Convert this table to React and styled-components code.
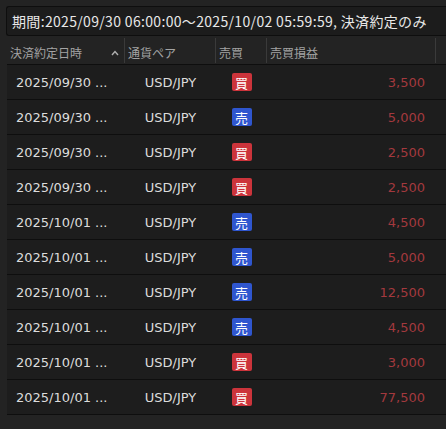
import React from 'react';
import styled, { createGlobalStyle } from 'styled-components';

const GlobalStyle = createGlobalStyle`
  html, body {
    margin: 0;
    background: #232323;
    overflow: hidden;
  }
  body {
    font-family: "DejaVu Sans", "Noto Sans CJK JP", sans-serif;
  }
`;

const Page = styled.div`
  padding: 6px 0 0 6px;
  width: 446px;
  height: 429px;
  box-sizing: border-box;
`;

const FilterBox = styled.div`
  height: 30px;
  box-sizing: border-box;
  border: 1px solid #0e0e0e;
  border-right: none;
  border-radius: 3px 0 0 3px;
  background: #1c1c1c;
  color: #e8e8e8;
  font-family: "Noto Sans CJK JP", sans-serif;
  font-size: 14px;
  letter-spacing: 0.33px;
  display: flex;
  align-items: center;
  padding-left: 5px;
  white-space: pre;
`;

const Table = styled.div`
  margin: 2px 0 0 1px;
  display: grid;
  grid-template-columns: 118px 91px 51px 169px 1fr;
`;

const HeadCell = styled.div`
  height: 27px;
  box-sizing: border-box;
  border-bottom: 1px solid #0e0e0e;
  display: flex;
  align-items: center;
  justify-content: space-between;
  padding: 3px 0 0 3px;
  font-family: "Noto Sans CJK JP", sans-serif;
  font-size: 12px;
  color: #a4a4a4;
  position: relative;
  &::after {
    content: '';
    display: ${p => (p.$sep ? 'block' : 'none')};
    position: absolute;
    right: 0;
    top: 0;
    bottom: 1px;
    width: 1px;
    background: #3a3a3a;
  }
`;

const Caret = styled.svg`
  width: 8px;
  height: 8px;
  margin-right: 6px;
`;

const Cell = styled.div`
  height: 35px;
  box-sizing: border-box;
  border-bottom: 1px solid #0e0e0e;
  background: #1d1d1d;
  display: flex;
  align-items: center;
  justify-content: ${p => p.$align || 'flex-start'};
  padding: ${p => p.$pad || '0'};
  font-size: 13px;
  color: #dcdcdc;
  white-space: nowrap;
`;

const Amount = styled(Cell)`
  color: #a3393e;
`;

const Badge = styled.span`
  width: 20px;
  height: 18px;
  border-radius: 2px;
  background: ${p => (p.$sell ? '#2f56cf' : '#cc343b')};
  color: #fff;
  font-family: "Noto Sans CJK JP", sans-serif;
  font-size: 13px;
  display: flex;
  align-items: center;
  justify-content: center;
  line-height: 1;
`;

const rows = [
  ['2025/09/30 ...', 'buy', '3,500'],
  ['2025/09/30 ...', 'sell', '5,000'],
  ['2025/09/30 ...', 'buy', '2,500'],
  ['2025/09/30 ...', 'buy', '2,500'],
  ['2025/10/01 ...', 'sell', '4,500'],
  ['2025/10/01 ...', 'sell', '5,000'],
  ['2025/10/01 ...', 'sell', '12,500'],
  ['2025/10/01 ...', 'sell', '4,500'],
  ['2025/10/01 ...', 'buy', '3,000'],
  ['2025/10/01 ...', 'buy', '77,500'],
];

export default function App() {
  return (
    <Page>
      <GlobalStyle />
      <FilterBox>期間:2025/09/30 06:00:00～2025/10/02 05:59:59, 決済約定のみ</FilterBox>
      <Table>
        <HeadCell $sep>
          決済約定日時
          <Caret viewBox="0 0 8 8">
            <path d="M1 6 L4 2.5 L7 6" fill="none" stroke="#b0b0b0" strokeWidth="1.4" />
          </Caret>
        </HeadCell>
        <HeadCell $sep>通貨ペア</HeadCell>
        <HeadCell $sep>売買</HeadCell>
        <HeadCell $sep>売買損益</HeadCell>
        <HeadCell />
        {rows.map(([date, side, amount], i) => (
          <React.Fragment key={i}>
            <Cell $pad="0 0 0 9px">{date}</Cell>
            <Cell $align="center">USD/JPY</Cell>
            <Cell $align="center">
              <Badge $sell={side === 'sell'}>{side === 'sell' ? '売' : '買'}</Badge>
            </Cell>
            <Amount $align="flex-end" $pad="0 11px 0 0">{amount}</Amount>
            <Cell />
          </React.Fragment>
        ))}
      </Table>
    </Page>
  );
}
